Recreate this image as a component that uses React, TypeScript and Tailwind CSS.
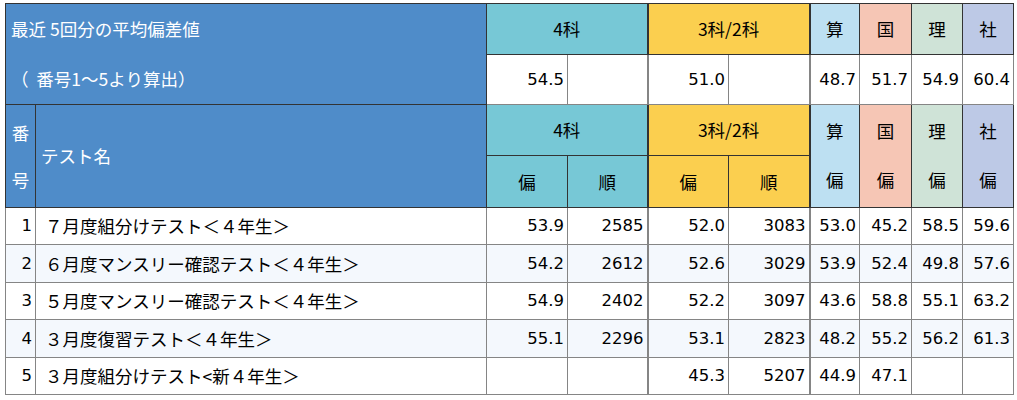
import * as React from "react";

type Row = {
  no: number;
  name: string;
  v: (string | null)[];
};

const rows: Row[] = [
  { no: 1, name: "７月度組分けテスト＜４年生＞", v: ["53.9", "2585", "52.0", "3083", "53.0", "45.2", "58.5", "59.6"] },
  { no: 2, name: "６月度マンスリー確認テスト＜４年生＞", v: ["54.2", "2612", "52.6", "3029", "53.9", "52.4", "49.8", "57.6"] },
  { no: 3, name: "５月度マンスリー確認テスト＜４年生＞", v: ["54.9", "2402", "52.2", "3097", "43.6", "58.8", "55.1", "63.2"] },
  { no: 4, name: "３月度復習テスト＜４年生＞", v: ["55.1", "2296", "53.1", "2823", "48.2", "55.2", "56.2", "61.3"] },
  { no: 5, name: "３月度組分けテスト<新４年生＞", v: [null, null, "45.3", "5207", "44.9", "47.1", null, null] },
];

const subjects = [
  { label: "算", bg: "bg-[#bde0f2]" },
  { label: "国", bg: "bg-[#f6c6b5]" },
  { label: "理", bg: "bg-[#cfe3d7]" },
  { label: "社", bg: "bg-[#bdc9e6]" },
];

const averages = ["48.7", "51.7", "54.9", "60.4"];

// header cells get dark borders, body cells grey ones
const hd = "border border-[#333] font-normal p-0 text-center align-middle";
const cell = "border border-[#858585] p-0 align-middle";
const num = `${cell} pr-[3px] text-right font-['DejaVu_Sans',sans-serif] text-[16.5px]`;

export default function App() {
  return (
    <div className="w-[1017px] h-[400px] bg-white pt-[3px] pl-[5px] font-['Noto_Sans_CJK_JP',sans-serif] text-[17.5px] leading-[26px] text-black">
      <table className="w-[1008px] table-fixed border-collapse">
        <colgroup>
          <col className="w-[30px]" />
          <col className="w-[451px]" />
          <col className="w-[81px]" />
          <col className="w-[80px]" />
          <col className="w-[81px]" />
          <col className="w-[81px]" />
          <col className="w-[50px]" />
          <col className="w-[52px]" />
          <col className="w-[51px]" />
          <col className="w-[51px]" />
        </colgroup>
        <thead>
          <tr className="h-[51px]">
            <th
              colSpan={2}
              rowSpan={2}
              className="border border-[#333] font-normal p-0 pl-[5px] text-left align-middle bg-[#4f8cc9] text-white leading-[50px]"
            >
              <div>最近&nbsp;5回分の平均偏差値</div>
              <div>（&nbsp;&nbsp;番号1～5より算出）</div>
            </th>
            <th colSpan={2} className={`${hd} bg-[#77c8d6]`}>
              4科
            </th>
            <th colSpan={2} className={`${hd} border-l-2 bg-[#fbcf4f]`}>
              3科/2科
            </th>
            {subjects.map((s, i) => (
              <th key={s.label} className={`${hd} ${s.bg} ${i === 0 ? "border-l-2" : ""}`}>
                {s.label}
              </th>
            ))}
          </tr>
          <tr className="h-[50px]">
            <td className={num}>54.5</td>
            <td className={num}></td>
            <td className={`${num} border-l-2`}>51.0</td>
            <td className={num}></td>
            {averages.map((a, i) => (
              <td key={i} className={`${num} ${i === 0 ? "border-l-2" : ""}`}>
                {a}
              </td>
            ))}
          </tr>
          <tr className="h-[51px]">
            <th rowSpan={2} className={`${hd} bg-[#4f8cc9] text-white leading-[47px]`}>
              <div>番</div>
              <div>号</div>
            </th>
            <th
              rowSpan={2}
              className="border border-[#333] font-normal p-0 pl-[5px] text-left align-middle bg-[#4f8cc9] text-white"
            >
              テスト名
            </th>
            <th colSpan={2} className={`${hd} bg-[#77c8d6]`}>
              4科
            </th>
            <th colSpan={2} className={`${hd} border-l-2 bg-[#fbcf4f]`}>
              3科/2科
            </th>
            {subjects.map((s, i) => (
              <th
                key={s.label}
                className={`${hd} ${s.bg} border-b-0 pt-[2px] ${i === 0 ? "border-l-2" : ""}`}
              >
                {s.label}
              </th>
            ))}
          </tr>
          <tr className="h-[52px]">
            <th className={`${hd} bg-[#77c8d6]`}>偏</th>
            <th className={`${hd} bg-[#77c8d6]`}>順</th>
            <th className={`${hd} border-l-2 bg-[#fbcf4f]`}>偏</th>
            <th className={`${hd} bg-[#fbcf4f]`}>順</th>
            {subjects.map((s, i) => (
              <th
                key={s.label}
                className={`${hd} ${s.bg} border-t-0 pb-[2px] ${i === 0 ? "border-l-2" : ""}`}
              >
                偏
              </th>
            ))}
          </tr>
        </thead>
        <tbody>
          {rows.map((r) => (
            <tr
              key={r.no}
              className={`${r.no % 2 === 0 ? "h-[38px] bg-[#f4f8fd]" : "h-[37px] bg-white"}`}
            >
              <td className={num}>{r.no}</td>
              <td className={`${cell} pl-[9px] text-left`}>{r.name}</td>
              {r.v.map((x, i) => (
                <td key={i} className={`${num} ${i === 2 || i === 4 ? "border-l-2" : ""}`}>
                  {x ?? ""}
                </td>
              ))}
            </tr>
          ))}
        </tbody>
      </table>
    </div>
  );
}
